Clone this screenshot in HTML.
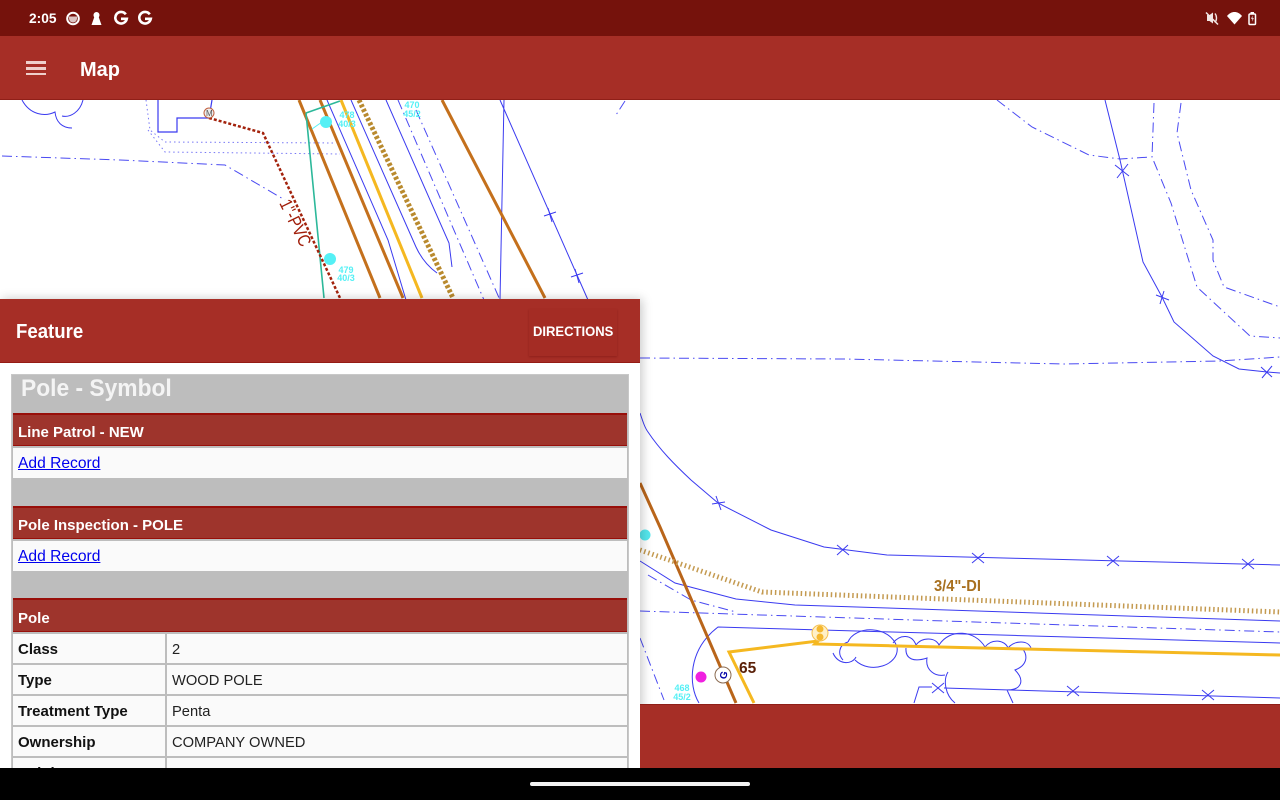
<!DOCTYPE html>
<html><head><meta charset="utf-8"><style>
html,body{margin:0;padding:0;width:1280px;height:800px;overflow:hidden;background:#fff;font-family:"Liberation Sans",sans-serif}
div{position:absolute;box-sizing:border-box}
.t{white-space:nowrap;line-height:20px;transform-origin:0 50%}
.hd{left:13px;width:614px;background:#9e342c;border-top:2px solid #980f0a;border-bottom:1px solid #980f0a}
.rw{left:13px;width:614px;background:#fafafa}
.k{left:18px;font-weight:bold;font-size:15px;color:#111}
.v{left:172px;font-size:15px;color:#222;transform:scaleX(.98)}
a{color:#0000ee;text-decoration:underline}
</style></head><body>
<svg style="position:absolute;left:0;top:0;filter:blur(.35px)" width="1280" height="800" viewBox="0 0 1280 800" fill="none">
<g stroke="#3a3af0" stroke-width="1">
<path d="M22 100C30 115 45 117 55 112C56 122 62 128 72 128M62 116C70 118 80 112 83 100"/>
<path d="M158 100V132H177V118H209L212 100" stroke-width="1.2"/>
<path d="M327 100L388 240L406 300M351 100L416 247C422 260 430 268 437 273M386 100L449 243L452 267M504 100L500 300M500 100L588 300"/>
<path d="M1105 100L1120 160L1143 262L1162 297L1174 322L1213 356L1239 369L1267 372L1280 373"/>
<path d="M640 413C643 422 645 428 648 432C660 450 675 465 691 480L718 503L771 530L824 547L887 555L1280 565"/>
<path d="M640 561L675 583L736 599L795 605L1280 621"/>
<path d="M699 703C688 685 688 650 718 627L1280 643"/>
<path d="M848 642C855 625 890 625 897 647C900 665 870 675 855 660M833 653C838 665 852 665 856 657M848 642C838 645 838 655 843 660M893 643C900 634 912 634 916 645C922 637 935 637 939 645C950 628 975 630 985 647C992 638 1005 640 1008 648C1015 640 1028 640 1031 648M1022 648C1028 655 1028 665 1015 670C1025 680 1022 690 1007 690L1013 703M906 648C905 660 915 662 927 658C925 670 935 677 945 675M948 672C943 680 945 695 955 703M914 703L919 687H932M944 688L1280 698"/>
</g>
<g stroke="#4a4af2" stroke-width="1" stroke-dasharray="10 4 1.500 4">
<path d="M398 100L484 300M416 110L500 300M625 101L616 115"/>
<path d="M2 156L120 160L225 165L285 200"/>
<path d="M997 100L1032 127L1089 155L1120 159L1150 157M1154 103L1152 157L1171 203L1197 287L1250 336L1280 338M1181 103L1177 133L1191 190L1213 240L1213 260L1224 287L1280 307"/>
<path d="M640 358L844 359L1064 364L1220 361L1280 357"/>
<path d="M640 611L1280 632M648 575L691 600L736 612M640 638L664 700"/>
</g>
<path d="M146 100L150 130L165 142L335 143M148 130L165 152L340 154" stroke="#7777f5" stroke-dasharray="1.500 3"/>
<path d="M1115 165l14 11M1128 164l-11 14M1156 295l13 5M1164 291l-4 13M1261 367l11 10M1272 366l-10 12M544 216l12-4M548 208l4 14M571 277l12-4M575 269l4 14M712 504l13-2M716 496l5 14M837 555l11-10M837 545l12 10M972 553l12 10M972 563l12-10M1107 556l12 10M1107 566l12-10M1242 559l12 10M1242 569l12-10M932 683l12 10M932 693l12-10M1067 686l12 10M1067 696l12-10M1202 690l12 10M1202 700l12-10" stroke="#3a3af0"/>
<path d="M299 100L380 298M320 100L403 298M442 100L545 298" stroke="#c4701c" stroke-width="3"/>
<path d="M640 483L660 527L736 703" stroke="#b9651a" stroke-width="3"/>
<path d="M306 113L340 101M306 113L324 298" stroke="#2cb89a" stroke-width="1.600"/>
<path d="M341 100L422 298" stroke="#f5b820" stroke-width="3"/>
<path d="M754 703L729 652L818 641L815 644L1280 655" stroke="#f5b820" stroke-width="3"/>
<path d="M359 100L453 298" stroke="#b98a2e" stroke-width="5" stroke-dasharray="3 2"/>
<path d="M640 550L762 592L1280 612" stroke="#c49a50" stroke-width="5" stroke-dasharray="1.500 2.800"/>
<path d="M209 118L263 133L340 298" stroke="#a3220c" stroke-width="2.500" stroke-dasharray="3 2"/>
<circle cx="209" cy="113" r="5" fill="#eee" stroke="#c06040"/>
<text x="206" y="116" font-size="8" fill="#555" font-family="Liberation Sans">M</text>
<circle cx="326" cy="122" r="6" fill="#55f0f5"/><circle cx="330" cy="259" r="6" fill="#55f0f5"/><circle cx="645" cy="535" r="5.500" fill="#55e8ee"/>
<path d="M322 122L312 129" stroke="#55f0f5"/>
<g fill="#55f0f5" font-size="9" font-weight="bold" font-family="Liberation Sans" text-anchor="middle">
<text x="347" y="118">478</text><text x="347" y="127">40/3</text>
<text x="346" y="273">479</text><text x="346" y="281">40/3</text>
<text x="412" y="108">470</text><text x="412" y="117">45/2</text>
<text x="682" y="691">468</text><text x="682" y="700">45/2</text>
</g>
<text x="0" y="0" transform="translate(279 203) rotate(64)" font-size="18" fill="#a01c08" font-family="Liberation Sans" textLength="50" lengthAdjust="spacingAndGlyphs">1"-PVC</text>
<text x="934" y="591" font-size="15.500" font-weight="bold" fill="#a8701f" font-family="Liberation Sans" textLength="47" lengthAdjust="spacingAndGlyphs">3/4"-DI</text>
<text x="739" y="673" font-size="15.500" font-weight="bold" fill="#5a2008" font-family="Liberation Sans">65</text>
<circle cx="701" cy="677" r="5.500" fill="#f020e0"/>
<circle cx="723" cy="675" r="8" fill="#fff" stroke="#8a6a50"/>
<text x="723" y="679" font-size="10" font-weight="bold" fill="#0000a8" text-anchor="middle" font-family="Liberation Sans" transform="rotate(-75 723 675)">G</text>
<circle cx="820" cy="633" r="8" fill="#fff0c8" stroke="#f5c050"/><circle cx="820" cy="629" r="3.500" fill="#f5b830"/><circle cx="820" cy="637" r="3.500" fill="#f5b830"/>
</svg>

<div style="left:0;top:0;width:1280px;height:36px;background:#75120c"></div>
<div class="t" style="left:29px;top:8px;color:#fff;font-size:14px;font-weight:bold;transform:scaleX(.98)">2:05</div>
<svg style="position:absolute;left:0;top:0" width="1280" height="36" fill="none">
<circle cx="73" cy="18.500" r="5.800" stroke="#fff" stroke-width="2"/><path d="M69 16.500h8v2a4 4 0 0 1-8 0z" fill="#fff" opacity=".75"/>
<path d="M96.500 12a3 3 0 0 1 3 3c0 1-.4 1.600-.7 2.200L101.500 25h-10l2.700-7.800c-.4-.6-.7-1.200-.7-2.200a3 3 0 0 1 3-3z" fill="#fff"/>
<path d="M125.800 14.300A5.800 5.800 0 1 0 126.800 18.800H121" stroke="#fff" stroke-width="2.600"/>
<path d="M149.800 14.300A5.800 5.800 0 1 0 150.800 18.800H145" stroke="#fff" stroke-width="2.600"/>
<path d="M1207 15h2.500l3.500-2.500v11l-3.500-2.500H1207z" fill="#f2e6e4"/><path d="M1215 13.500c2 2.500 2 6.500 0 9" stroke="#f2e6e4" stroke-width="1.400"/><path d="M1206 12.500l12 12" stroke="#f2e6e4" stroke-width="1.500"/>
<path d="M1227 16c4.500-5.300 10.500-5.300 15 0l-7.500 8.500z" fill="#fff"/>
<rect x="1249" y="14" width="6.500" height="10.500" rx="1" stroke="#fff" stroke-width="1.500"/><rect x="1250.500" y="12" width="3.500" height="2" fill="#fff"/><path d="M1252.800 15.500l-1.800 3.300h1.500l-.5 3 1.800-3.700h-1.400z" fill="#fff"/>
</svg>

<div style="left:0;top:36px;width:1280px;height:64px;background:#a62e26;border-bottom:1px solid #8f1f18"></div>
<div style="left:26px;top:61px;width:20px;height:2.500px;background:#efcfcb"></div>
<div style="left:26px;top:67px;width:20px;height:2.500px;background:#efcfcb"></div>
<div style="left:26px;top:72.500px;width:20px;height:2.500px;background:#efcfcb"></div>
<div class="t" style="left:80px;top:60px;color:#fff;font-size:20px;font-weight:bold">Map</div>

<div style="left:0;top:299px;width:640px;height:469px;background:#fff;box-shadow:2px 0 10px rgba(0,0,0,.22)"></div>
<div style="left:640px;top:704px;width:640px;height:64px;background:#a62e26;border-top:1px solid #8f1f18"></div>
<div style="left:0;top:299px;width:640px;height:64px;background:#a62e26;border-bottom:1px solid #951c14"></div>
<div class="t" style="left:16px;top:322px;color:#fff;font-size:20px;font-weight:bold;transform:scaleX(.93)">Feature</div>
<div style="left:529px;top:309px;width:88px;height:47px;background:#a42c24;box-shadow:0 1px 2px rgba(90,0,0,.3)"></div>
<div class="t" style="left:533px;top:321px;color:#fff;font-size:14px;font-weight:bold;transform:scaleX(.93)">DIRECTIONS</div>

<div style="left:11px;top:374px;width:618px;height:394px;background:#bdbdbd;border:1px solid #c8c8c8;border-bottom:0"></div>
<div class="t" style="left:21px;top:379px;color:#f4f4f4;font-size:24px;font-weight:bold;transform:scaleX(.95)">Pole - Symbol</div>

<div class="hd" style="top:413px;height:33px"></div>
<div class="t" style="left:18px;top:423px;color:#fff;font-size:15px;font-weight:bold">Line Patrol - NEW</div>
<div class="rw" style="top:448px;height:30px"></div>
<div class="t" style="left:18px;top:454px;font-size:16px;transform:scaleX(.975)"><a>Add Record</a></div>

<div class="hd" style="top:506px;height:33px"></div>
<div class="t" style="left:18px;top:516px;color:#fff;font-size:15px;font-weight:bold">Pole Inspection - POLE</div>
<div class="rw" style="top:541px;height:30px"></div>
<div class="t" style="left:18px;top:547px;font-size:16px;transform:scaleX(.975)"><a>Add Record</a></div>

<div class="hd" style="top:598px;height:34px"></div>
<div class="t" style="left:18px;top:609px;color:#fff;font-size:15px;font-weight:bold">Pole</div>

<div class="rw" style="top:634px;height:29px"></div><div class="rw" style="top:665px;height:29px"></div><div class="rw" style="top:696px;height:29px"></div><div class="rw" style="top:727px;height:29px"></div><div class="rw" style="top:758px;height:10px"></div>
<div style="left:165px;top:634px;width:2px;height:134px;background:#bdbdbd"></div>
<div class="t k" style="top:640px">Class</div><div class="t v" style="top:640px">2</div>
<div class="t k" style="top:671px">Type</div><div class="t v" style="top:671px">WOOD POLE</div>
<div class="t k" style="top:702px">Treatment Type</div><div class="t v" style="top:702px">Penta</div>
<div class="t k" style="top:733px">Ownership</div><div class="t v" style="top:733px">COMPANY OWNED</div>
<div class="t k" style="top:764px">Height</div><div class="t v" style="top:764px">45</div>

<div style="left:0;top:768px;width:1280px;height:32px;background:#000"></div>
<div style="left:530px;top:782px;width:220px;height:4px;border-radius:2px;background:#f2f2f2"></div>
</body></html>
